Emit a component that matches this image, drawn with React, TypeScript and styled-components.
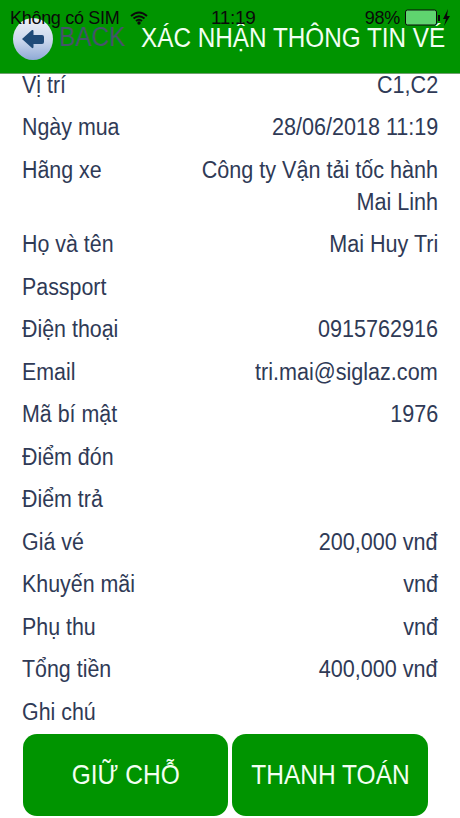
import React from "react";
import styled, { createGlobalStyle } from "styled-components";

const GlobalStyle = createGlobalStyle`
  html, body {
    margin: 0;
    padding: 0;
    background: #fff;
  }
  body {
    font-family: "Liberation Sans", Arial, sans-serif;
  }
`;

const Screen = styled.div`
  width: 460px;
  height: 818px;
  display: flex;
  flex-direction: column;
  overflow: hidden;
  background: #fff;
`;

const Header = styled.header`
  position: relative;
  z-index: 1;
  flex: none;
  height: 74px;
  background: #009400;
  border-bottom: 1px solid #6f9f6f;
  box-sizing: border-box;
  display: flex;
  align-items: flex-start;
  padding: 18px 0 0 13px;
`;

const StatusBar = styled.div`
  position: absolute;
  top: 7px;
  left: 10px;
  right: 9px;
  height: 22px;
  display: flex;
  align-items: center;
  color: #0a0a0a;
  font-size: 18px;
  letter-spacing: -0.3px;
`;

const Carrier = styled.span`
  width: 120px;
  white-space: nowrap;
`;

const Clock = styled.span`
  margin-left: 63px;
  font-size: 19px;
`;

const Battery = styled.div`
  margin-left: auto;
  display: flex;
  align-items: center;
  gap: 5px;
`;

const BackCircle = styled.div`
  flex: none;
  width: 40px;
  height: 42px;
  border-radius: 50%;
  background: linear-gradient(180deg, #eef1f8 0%, #c9d6ec 55%, #8fa9d6 100%);
  display: flex;
  align-items: center;
  justify-content: center;
`;

const BackLabel = styled.span`
  margin: 4px 0 0 6px;
  width: 80px;
  color: #45546a;
  font-size: 27px;
  line-height: 30px;
  transform: scaleX(0.9);
  transform-origin: left;
`;

const Title = styled.h1`
  margin: 5px 0 0 8px;
  color: #f2fff2;
  font-size: 27px;
  line-height: 30px;
  font-weight: 400;
  white-space: nowrap;
  transform: scaleX(0.9);
  transform-origin: left;
`;

const List = styled.main`
  flex: 1;
  margin-top: -10.5px;
  padding: 0 22px;
`;

const Row = styled.div`
  display: flex;
  justify-content: space-between;
  align-items: flex-start;
  padding: 8px 0;
  min-height: 26.5px;
  color: #2f3a56;
  font-size: 23px;
  line-height: 26.5px;
`;

const Label = styled.span`
  flex: none;
  display: inline-block;
  transform: scaleX(0.93);
  transform-origin: left;
`;

const Value = styled.span`
  display: inline-block;
  max-width: 260px;
  text-align: right;
  transform: scaleX(0.938);
  transform-origin: right;
`;

const WideValue = styled(Value)`
  line-height: 32px;
  margin-top: -3px;
  margin-bottom: -2.5px;
  max-width: 270px;
`;

const Footer = styled.footer`
  flex: none;
  height: 84px;
  display: flex;
  gap: 4px;
  padding: 0 32px 2px 23px;
  box-sizing: border-box;
`;

const ActionButton = styled.button<{ $width: number }>`
  width: ${(p) => p.$width}px;
  border: none;
  border-radius: 14px;
  background: #009400;
  color: #f2fff2;
  font-family: inherit;
  font-size: 28px;
`;

const ButtonText = styled.span`
  display: inline-block;
  white-space: nowrap;
  transform: scaleX(0.875);
`;

const rows = [
  ["Vị trí", "C1,C2"],
  ["Ngày mua", "28/06/2018 11:19"],
  ["Hãng xe", "Công ty Vận tải tốc hành Mai Linh"],
  ["Họ và tên", "Mai Huy Tri"],
  ["Passport", ""],
  ["Điện thoại", "0915762916"],
  ["Email", "tri.mai@siglaz.com"],
  ["Mã bí mật", "1976"],
  ["Điểm đón", ""],
  ["Điểm trả", ""],
  ["Giá vé", "200,000 vnđ"],
  ["Khuyến mãi", "vnđ"],
  ["Phụ thu", "vnđ"],
  ["Tổng tiền", "400,000 vnđ"],
  ["Ghi chú", ""],
];

export default function App() {
  return (
    <Screen>
      <GlobalStyle />
      <Header>
        <BackCircle>
          <svg width="24" height="20" viewBox="0 0 24 20">
            <path d="M1 10 L11 1 Q12.500 0.500 12.500 2 V6 H21 Q23 6 23 8 V13 Q23 15 21 15 H12.500 V18 Q12.500 19.500 11 19 Z" fill="#1f4a78" />
          </svg>
        </BackCircle>
        <BackLabel>BACK</BackLabel>
        <Title>XÁC NHẬN THÔNG TIN VÉ</Title>
        <StatusBar>
          <Carrier>Không có SIM</Carrier>
          <svg width="18" height="14" viewBox="0 0 18 14">
            <path d="M1 5 Q9 -2 17 5 M3.500 7.500 Q9 3 14.500 7.500 M6 10 Q9 7.500 12 10" fill="none" stroke="#0a0a0a" strokeWidth="2" />
            <circle cx="9" cy="12" r="1.700" fill="#0a0a0a" />
          </svg>
          <Clock>11:19</Clock>
          <Battery>
            <span>98%</span>
            <svg width="46" height="18" viewBox="0 0 46 18">
              <rect x="0.500" y="1" width="31" height="15" rx="2" fill="#5fd46f" stroke="#0a0a0a" />
              <rect x="33" y="6" width="2" height="6" fill="#0a0a0a" />
              <path d="M43 0 L38 10 H41 L39 17 L45 7 H42 Z" fill="#0a0a0a" />
            </svg>
          </Battery>
        </StatusBar>
      </Header>
      <List>
        {rows.map(([label, value]) =>
          value.length > 20 ? (
            <Row key={label}>
              <Label>{label}</Label>
              <WideValue>{value}</WideValue>
            </Row>
          ) : (
            <Row key={label}>
              <Label>{label}</Label>
              <Value>{value}</Value>
            </Row>
          )
        )}
      </List>
      <Footer>
        <ActionButton $width={205}>
          <ButtonText>GIỮ CHỖ</ButtonText>
        </ActionButton>
        <ActionButton $width={196}>
          <ButtonText>THANH TOÁN</ButtonText>
        </ActionButton>
      </Footer>
    </Screen>
  );
}
